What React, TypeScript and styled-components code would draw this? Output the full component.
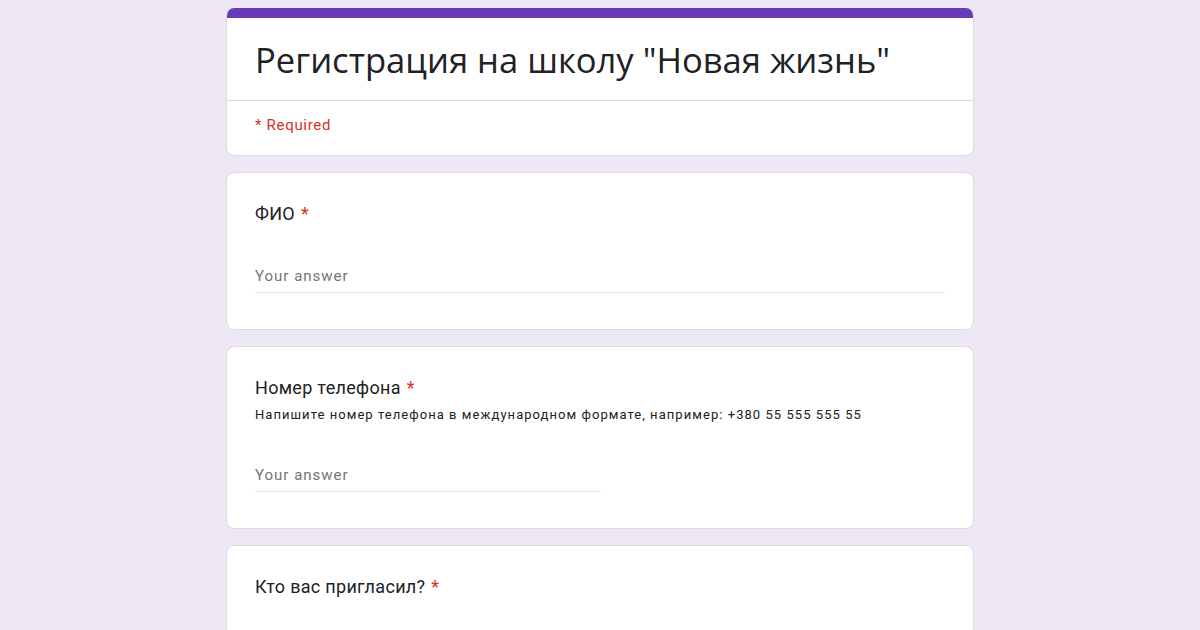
import React from 'react';
import styled, { createGlobalStyle } from 'styled-components';

const GlobalStyle = createGlobalStyle`
  html, body {
    margin: 0;
    padding: 0;
    background: #ede7f6;
    font-family: Roboto, "Liberation Sans", sans-serif;
    color: #202124;
  }
`;

const Page = styled.div`
  display: flex;
  flex-direction: column;
  align-items: center;
  gap: 16px;
  padding-top: 8px;
  height: 630px;
  overflow: hidden;
  box-sizing: border-box;
`;

const Card = styled.div`
  width: 748px;
  box-sizing: border-box;
  background: #fff;
  border: 1px solid #dadce0;
  border-radius: 8px;
  flex-shrink: 0;
`;

const HeaderCard = styled(Card)`
  border-top: none;
  overflow: hidden;
`;

const Accent = styled.div`
  height: 10px;
  background: #673ab7;
  margin: 0 -1px;
`;

const TitleBlock = styled.div`
  padding: 18px 28px 16px 28px;
  border-bottom: 1px solid #dadce0;
`;

const Title = styled.h1`
  margin: 0;
  font-family: "Open Sans", Roboto, sans-serif;
  font-weight: 400;
  font-size: 34.6px;
  line-height: 48px;
  white-space: nowrap;
  color: #202124;
`;

const RequiredNote = styled.div`
  padding: 14px 28px 20px 28px;
  font-size: 15px;
  line-height: 20px;
  letter-spacing: 0.7px;
  color: #d93025;
`;

const QuestionCard = styled(Card)`
  padding: 29px 28px 36px 28px;
`;

const Question = styled.div`
  font-size: 18px;
  line-height: 24px;
  letter-spacing: 0.3px;
  color: #202124;
`;

const Star = styled.span`
  color: #d93025;
  margin-left: 6px;
`;

const Hint = styled.div`
  margin-top: 5px;
  font-size: 13px;
  line-height: 20px;
  letter-spacing: 1.05px;
  color: #202124;
`;

const Answer = styled.div<{ $half?: boolean }>`
  margin-top: 38px;
  width: ${({ $half }) => ($half ? '346px' : '100%')};
  padding-bottom: 4px;
  border-bottom: 1px solid #e0e0e0;
  font-size: 15px;
  line-height: 24px;
  letter-spacing: 1px;
  color: #70757a;
`;

export default function App() {
  return (
    <>
      <GlobalStyle />
      <Page>
        <HeaderCard>
          <Accent />
          <TitleBlock>
            <Title>Регистрация на школу "Новая жизнь"</Title>
          </TitleBlock>
          <RequiredNote>* Required</RequiredNote>
        </HeaderCard>

        <QuestionCard>
          <Question>
            ФИО<Star>*</Star>
          </Question>
          <Answer>Your answer</Answer>
        </QuestionCard>

        <QuestionCard>
          <Question>
            Номер телефона<Star>*</Star>
          </Question>
          <Hint>Напишите номер телефона в международном формате, например: +380 55 555 555 55</Hint>
          <Answer $half>Your answer</Answer>
        </QuestionCard>

        <QuestionCard>
          <Question>
            Кто вас пригласил?<Star>*</Star>
          </Question>
          <Answer>Your answer</Answer>
        </QuestionCard>
      </Page>
    </>
  );
}
